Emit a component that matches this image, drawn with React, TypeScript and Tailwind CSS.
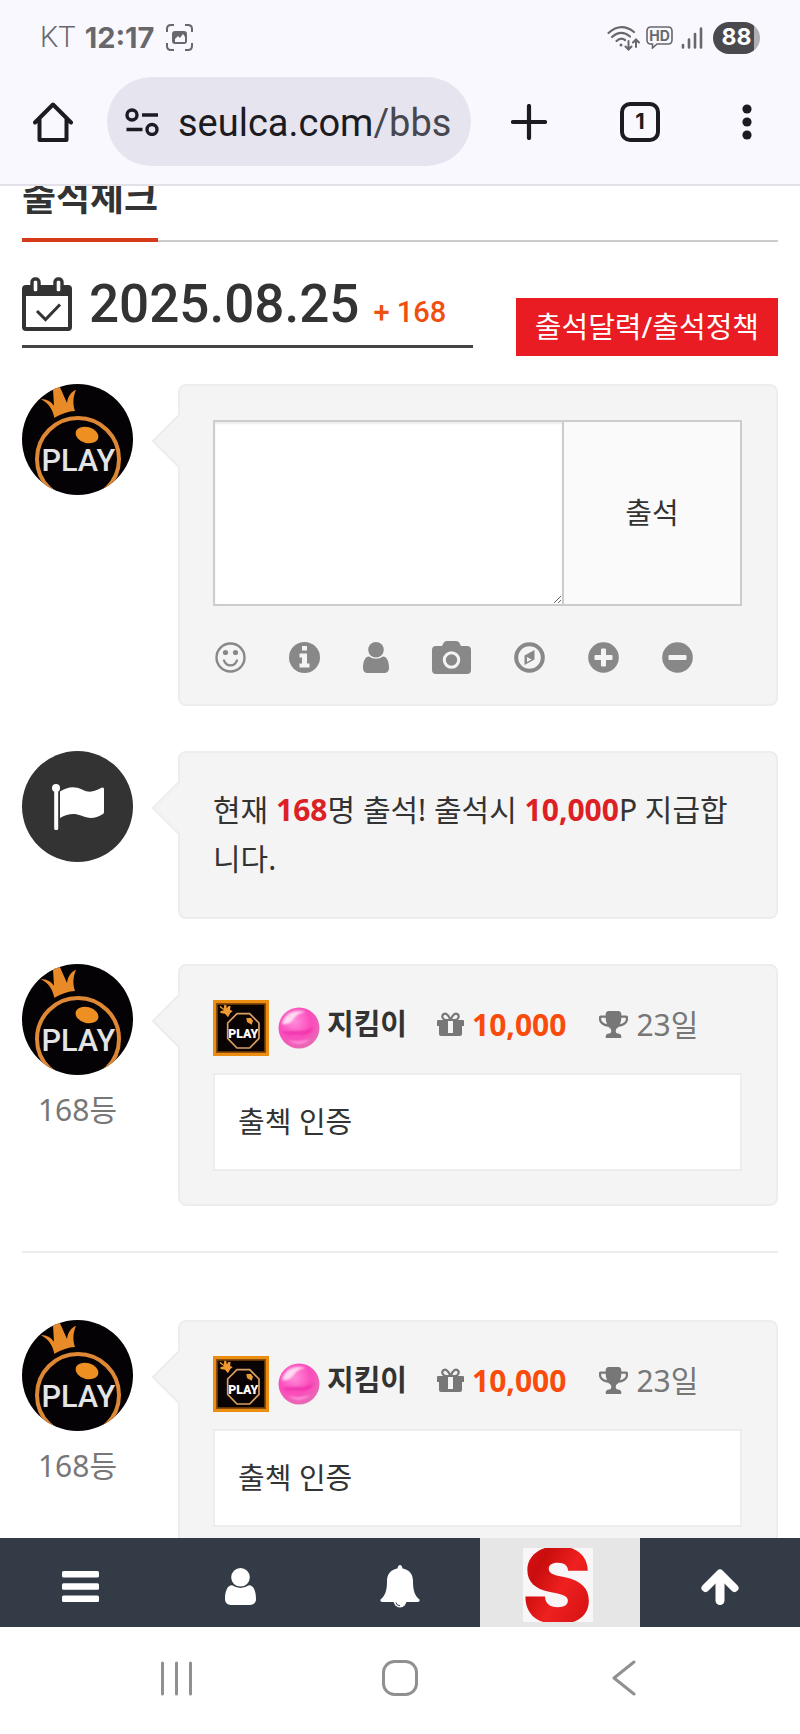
import type { ReactNode } from 'react'

function HomeIcon() {
  return (
    <svg width="40" height="40" viewBox="0 0 40 40" fill="none" stroke="#1b1b21" strokeWidth="4" strokeLinejoin="round" strokeLinecap="round">
      <path d="M2 20.500 20 2.500 38 20.500M6.500 17v21h27V17" />
    </svg>
  )
}

function TuneIcon() {
  return (
    <svg width="34" height="28" viewBox="0 0 34 28" fill="none" stroke="#1b1b21" strokeWidth="3.400">
      <circle cx="7" cy="7" r="5" />
      <circle cx="27" cy="21.500" r="5" />
      <path d="M17 7h16M1.500 21.500h16" />
    </svg>
  )
}

function CaptureIcon() {
  return (
    <svg width="27" height="27" viewBox="0 0 27 27" fill="none" stroke="#68686c" strokeWidth="2">
      <path d="M1 8V5q0-4 4-4h3M19 1h3q4 0 4 4v3M26 19v3q0 4-4 4h-3M8 26H5q-4 0-4-4v-3" />
      <rect x="7" y="8" width="13" height="11" rx="2" fill="#68686c" />
      <path d="M9 18v-3l3-3 2 2 3-4 2 3v5z" fill="#f9f8ff" stroke="none" />
    </svg>
  )
}

function WifiIcon() {
  return (
    <svg width="33" height="26" viewBox="0 0 33 26" fill="none" stroke="#68686c" strokeWidth="2.200" strokeLinecap="round">
      <path d="M1.500 8Q14-3 27 7M5 12Q14 4 23 11.500M9.500 16Q14 12 18 15" />
      <circle cx="14" cy="20" r="1.500" fill="#68686c" stroke="none" />
      <path d="M21.500 16v8M18.500 21.500l3 3 3-3M29 22v-7M26 17.500l3-3 3 3" strokeWidth="2" />
    </svg>
  )
}

function HdIcon() {
  return (
    <svg width="27" height="23" viewBox="0 0 27 23" fill="none" stroke="#68686c" strokeWidth="1.600">
      <path d="M5 1h17q4 0 4 4v9q0 4-4 4H11l-4.500 4V18H5q-4 0-4-4V5q0-4 4-4z" />
      <text x="13.500" y="14.500" textAnchor="middle" fontFamily="Inter, sans-serif" fontSize="14" fontWeight="700" fill="#68686c" stroke="none">
        HD
      </text>
    </svg>
  )
}

function SignalIcon() {
  return (
    <svg width="22" height="22" viewBox="0 0 22 22" stroke="#68686c" strokeWidth="2.600" strokeLinecap="round">
      <path d="M2 18v2.500M8 12.500v8M14 7v13.500M20 1.500v19" />
    </svg>
  )
}

function CalendarIcon() {
  return (
    <svg width="50" height="54" viewBox="0 0 50 54" fill="none" stroke="#333">
      <rect x="2" y="10" width="46" height="42" rx="2" strokeWidth="4" />
      <path d="M2 10h46v9H2z" fill="#333" stroke="none" />
      <rect x="10" y="2" width="7" height="14" rx="3" fill="#fff" strokeWidth="3.400" />
      <rect x="33" y="2" width="7" height="14" rx="3" fill="#fff" strokeWidth="3.400" />
      <path d="M15 34l8.500 8.500L38 27.500" strokeWidth="3" />
    </svg>
  )
}

function SmileIcon() {
  return (
    <svg width="31" height="31" viewBox="0 0 31 31" fill="none" stroke="#888" strokeLinecap="round">
      <circle cx="15.500" cy="15.500" r="14" strokeWidth="2.400" />
      <path d="M9 18.500c2.500 6.500 10.500 6.500 13 0" strokeWidth="2.200" />
      <circle cx="10.500" cy="10.500" r="2.600" fill="#888" stroke="none" />
      <circle cx="20.500" cy="10.500" r="2.600" fill="#888" stroke="none" />
    </svg>
  )
}

function InfoIcon() {
  return (
    <svg width="31" height="31" viewBox="0 0 31 31">
      <circle cx="15.500" cy="15.500" r="15.500" fill="#888" />
      <path d="M13 4h5v4.500h-5zM10.500 11.500H18v10h2.500v4h-10v-4H13v-6h-2.500z" fill="#f4f4f4" />
    </svg>
  )
}

function UserIcon({ className }: { className: string }) {
  return (
    <svg className={className} viewBox="0 0 26 31" fill="currentColor">
      <circle cx="13" cy="7.800" r="7.800" />
      <path d="M6 14.500q7 4.500 14 0c4.500 0 6 6 6 11.500 0 3-2 5-5 5H5c-3 0-5-2-5-5 0-5.500 1.500-11.500 6-11.500z" />
    </svg>
  )
}

function CameraIcon() {
  return (
    <svg width="39" height="33" viewBox="0 0 39 33">
      <path d="M4 5h6l1.500-3Q12.500 0 15 0h9q2.500 0 3.500 2L29 5h6q4 0 4 4v20q0 4-4 4H4q-4 0-4-4V9q0-4 4-4z" fill="#888" />
      <circle cx="19.500" cy="19" r="7.200" fill="none" stroke="#f4f4f4" strokeWidth="3" />
    </svg>
  )
}

function CompassIcon() {
  return (
    <svg width="31" height="31" viewBox="0 0 31 31">
      <circle cx="15.500" cy="15.500" r="13.300" fill="none" stroke="#888" strokeWidth="4" />
      <path d="M10.500 13.500 20.500 8v9.500l-10 5.500z" fill="#888" />
      <path d="M13 15l4.500 2.500L13 20z" fill="#f4f4f4" />
    </svg>
  )
}

function SignIcon({ plus }: { plus?: boolean }) {
  return (
    <svg width="31" height="31" viewBox="0 0 31 31">
      <circle cx="15.500" cy="15.500" r="15.300" fill="#888" />
      <rect x="6.500" y="13" width="18" height="5" rx="1" fill="#f4f4f4" />
      {plus && <rect x="13" y="6.500" width="5" height="18" rx="1" fill="#f4f4f4" />}
    </svg>
  )
}

function FlagIcon() {
  return (
    <svg width="52" height="46" viewBox="0 0 52 46" fill="#fff">
      <circle cx="4" cy="4" r="4" />
      <rect x="2.200" y="4" width="4" height="42" rx="1.500" />
      <path d="M8 7.500c7-4.500 14-6 22-2 8 4 12 2 20-2q2-.5 2 1.500v23q0 1.500-1 2c-8 5-14 5-22 1.500-7-3-14-1.500-21 2.500z" />
    </svg>
  )
}

function GiftIcon() {
  return (
    <svg width="27" height="24" viewBox="0 0 27 24">
      <g fill="none" stroke="#777" strokeWidth="2.200">
        <path d="M13.500 8C11 2 8.500 1 6.700 2 4 4 5.500 7.500 9 8zM13.500 8C16 2 18.500 1 20.300 2 23 4 21.500 7.500 18 8z" />
      </g>
      <path d="M1 8h25q1 0 1 1v5H0V9q0-1 1-1zM2 14h23v8q0 2-2 2H4q-2 0-2-2z" fill="#777" />
      <rect x="11" y="9" width="5" height="12" fill="#f4f4f4" />
    </svg>
  )
}

function TrophyIcon() {
  return (
    <svg width="29" height="27" viewBox="64 128 1664 1536" fill="#777">
      <path d="M522 883q-74-162-74-371h-256v96q0 78 94.500 162t235.500 113zm1078-275v-96h-256q0 209-74 371 141-29 235.500-113t94.500-162zm128-128v128q0 71-41.500 143t-112 130-173 97.500-215.500 44.500q-42 54-95 95-38 34-52.500 72.500t-14.500 89.500q0 54 30.500 91t97.500 37q75 0 133.500 45.500t58.500 114.500v64q0 14-9 23t-23 9h-832q-14 0-23-9t-9-23v-64q0-69 58.500-114.500t133.500-45.500q67 0 97.500-37t30.500-91q0-51-14.500-89.500t-52.500-72.500q-53-41-95-95-113-5-215.500-44.500t-173-97.500-112-130-41.500-143v-128q0-40 28-68t68-28h288v-96q0-66 47-113t113-47h576q66 0 113 47t47 113v96h288q40 0 68 28t28 68z" />
    </svg>
  )
}

function BellIcon() {
  return (
    <svg width="40" height="43" viewBox="0 0 40 43">
      <circle cx="20" cy="36" r="6.500" fill="#fff" />
      <path d="M20 0q2 0 2.500 3.500C29 4.500 33 9 33 16c0 9 1.500 14.500 6.500 18.500q.5 2.500-2 2.500h-35Q0 37 .5 34.500C5.500 30.500 7 25 7 16 7 9 11 4.500 17.500 3.500 18 0 20 0 20 0z" fill="#fff" />
      <path d="M16 37.500q.5 3 4 3.300" fill="none" stroke="#323b46" strokeWidth="1" />
    </svg>
  )
}

function PlayAvatar() {
  return (
    <svg className="size-[111px] rounded-full" viewBox="0 0 333 333" role="img" aria-label="PLAY">
      <rect width="333" height="333" fill="#050205" />
      <path d="M97 101C92 76 80 58 56 45c20 0 33 10 40 20l-3-50 18-12 24 54c2-18 10-32 27-40-9 22-10 42-3 64-20 1-40 8-62 20z" fill="#e98a28" />
      <circle cx="168" cy="225" r="123" fill="none" stroke="#de8836" strokeWidth="12" />
      <ellipse cx="195" cy="153" rx="35" ry="24" fill="#ee8f22" transform="rotate(15 195 153)" />
      <text x="169" y="260" textAnchor="middle" fontFamily="Roboto, sans-serif" fontSize="92" fontWeight="500" fill="#e4e4e4">
        PLAY
      </text>
    </svg>
  )
}

function MemberBadge() {
  return (
    <svg width="56" height="56" viewBox="0 0 168 168" role="img" aria-label="PLAY">
      <rect width="168" height="168" fill="#ea8d10" />
      <rect x="9" y="9" width="150" height="150" fill="#8a4c08" />
      <rect x="14" y="14" width="140" height="140" fill="#0a0304" />
      <path d="M22 17l10 9 2-12 6 1 1 10 6-8 6 2-2 10 8 5-7 5-7 13-9-11-14-2 1-6 10-2-13-9z" fill="#ee9a30" />
      <path d="M72 41h38l28 28v46l-28 29H72l-28-29V69z" fill="none" stroke="#d9a064" strokeWidth="5" />
      <path d="M100 54h14l6 8-4 12-14-8z" fill="#ee9a30" />
      <text x="91" y="115" textAnchor="middle" fontFamily="Roboto, sans-serif" fontSize="37" fontWeight="900" fill="#fff">
        PLAY
      </text>
    </svg>
  )
}

function PinkBall() {
  return (
    <svg width="42" height="42" viewBox="0 0 42 42">
      <defs>
        <radialGradient id="ball" cx="40%" cy="35%" r="65%">
          <stop offset="0" stopColor="#ff8ada" />
          <stop offset="0.600" stopColor="#fb4cbc" />
          <stop offset="1" stopColor="#e868b4" />
        </radialGradient>
        <filter id="soft" x="-20%" y="-20%" width="140%" height="140%">
          <feGaussianBlur stdDeviation="1" />
        </filter>
      </defs>
      <circle cx="21" cy="21" r="20.500" fill="url(#ball)" />
      <g filter="url(#soft)">
        <path d="M4 17C7 5 18 2 28 5c-8 1-10 4-13 8-3 4-7 5-11 4z" fill="#ffd9f1" />
        <path d="M5 25c12-3 20 2 31-5-2 7-10 8-18 8S8 28 5 25z" fill="#ea22a2" opacity="0.600" />
        <path d="M10 33c7 2 14 2 22-1-6 6-15 6-22 1z" fill="#ff9be0" />
      </g>
    </svg>
  )
}

function LogoMark() {
  return (
    <svg width="70" height="74" viewBox="0 0 70 74" role="img" aria-label="S">
      <defs>
        <linearGradient id="logo" x1="0" y1="0" x2="1" y2="1">
          <stop offset="0" stopColor="#e81818" />
          <stop offset="0.300" stopColor="#c90d0d" />
          <stop offset="0.550" stopColor="#f02020" />
          <stop offset="1" stopColor="#c80c0c" />
        </linearGradient>
      </defs>
      <rect width="70" height="74" fill="#f8f6f6" />
      <text x="34" y="75" textAnchor="middle" fontFamily="Inter, sans-serif" fontSize="104" fontWeight="900" fill="url(#logo)">
        S
      </text>
    </svg>
  )
}

function StatusBar() {
  return (
    <div className="flex h-[77px] items-center justify-between px-10 pb-[2px] text-[29px] text-[#68686c]">
      <div className="flex items-center">
        <span className="font-['Roboto',sans-serif] font-light">KT</span>
        <span className="ml-[9px] font-['Inter',sans-serif] font-bold">12:17</span>
        <span className="ml-3">
          <CaptureIcon />
        </span>
      </div>
      <div className="flex items-center gap-[6px]">
        <WifiIcon />
        <HdIcon />
        <span className="ml-[2px]">
          <SignalIcon />
        </span>
        <span className="ml-1 flex h-8 w-[47px] items-center justify-center rounded-full bg-linear-to-r from-[#4a4a4e] from-88% to-[#b0b0b4] to-88% font-['Inter',sans-serif] text-[23px] font-bold text-white">
          88
        </span>
      </div>
    </div>
  )
}

function BrowserBar() {
  return (
    <div className="flex h-[109px] items-start justify-between border-b-2 border-[#e2e1e8] pr-12 pl-[33px] text-[#1b1b21]">
      <div className="flex h-[89px] min-w-0 flex-1 items-center">
        <button type="button" aria-label="Home">
          <HomeIcon />
        </button>
        <button type="button" className="ml-[34px] flex h-[89px] min-w-0 max-w-[364px] flex-1 items-center rounded-full bg-[#e6e5ef] pr-4 pl-[18px]">
          <TuneIcon />
          <span className="ml-[19px] truncate pt-1 font-['Roboto',sans-serif] text-[38px] text-clip">
            seulca.com<span className="text-[#474750]">/bbs</span>
          </span>
        </button>
      </div>
      <div className="flex h-[89px] items-center">
        <button type="button" aria-label="New tab">
          <svg width="36" height="36" viewBox="0 0 36 36" stroke="#1b1b21" strokeWidth="4.200" strokeLinecap="round">
            <path d="M18 2v32M2 18h32" />
          </svg>
        </button>
        <button type="button" aria-label="Tabs" className="ml-[73px] flex size-10 items-center justify-center rounded-[10px] border-4 border-[#1b1b21] font-['Inter',sans-serif] text-[22px] font-bold">
          1
        </button>
        <button type="button" aria-label="Menu" className="ml-[82px]">
          <svg width="10" height="36" viewBox="0 0 10 36" fill="#1b1b21">
            <circle cx="5" cy="5" r="4.600" />
            <circle cx="5" cy="18" r="4.600" />
            <circle cx="5" cy="31" r="4.600" />
          </svg>
        </button>
      </div>
    </div>
  )
}

function Row({ avatar, rank, children }: { avatar: ReactNode; rank?: string; children: ReactNode }) {
  return (
    <div className="flex">
      <div className="w-[111px] shrink-0 text-center text-[30px] text-[#777]">
        {avatar}
        {rank && <div className="mt-[14px] leading-[42px]">{rank}</div>}
      </div>
      <div className="relative ml-[45px] min-w-0 flex-1 rounded-lg border-2 border-[#ededed] bg-[#f4f4f4] pr-[34px] pl-[33px]">
        <svg className="absolute top-[27px] -left-[28px]" width="29" height="56" viewBox="0 0 29 56">
          <path d="M29 1 1 28l28 27z" fill="#f4f4f4" />
          <path d="M27 2 1 28l26 26" fill="none" stroke="#ededed" strokeWidth="2" />
        </svg>
        {children}
      </div>
    </div>
  )
}

function CheckIn() {
  return (
    <Row avatar={<PlayAvatar />} rank="168등">
      <div className="flex items-start pt-[34px]">
        <div className="flex items-center gap-[9px]">
          <MemberBadge />
          <PinkBall />
        </div>
        <div className="flex h-12 items-center text-[30px]">
          <a href="#member" className="ml-[7px] text-[29px] font-bold">지킴이</a>
          <span className="ml-[30px]">
            <GiftIcon />
          </span>
          <b className="ml-2 text-[#f94c0c]">10,000</b>
          <span className="ml-[33px]">
            <TrophyIcon />
          </span>
          <span className="ml-2 text-[#777]">23일</span>
        </div>
      </div>
      <p className="mt-[17px] mb-[33px] border-2 border-[#ededed] bg-white px-[23px] leading-[94px]">출첵 인증</p>
    </Row>
  )
}

function BottomNav() {
  return (
    <nav className="grid h-[89px] shrink-0 grid-cols-5 bg-[#323b46] text-white">
      <button type="button" aria-label="메뉴" className="flex items-center justify-center pt-2">
        <svg width="37" height="31" viewBox="0 0 37 31" fill="currentColor">
          <rect width="37" height="6.500" rx="1.500" />
          <rect y="12.200" width="37" height="6.500" rx="1.500" />
          <rect y="24.400" width="37" height="6.500" rx="1.500" />
        </svg>
      </button>
      <button type="button" aria-label="회원" className="flex items-center justify-center pt-2">
        <UserIcon className="h-[37px] w-[31px]" />
      </button>
      <button type="button" aria-label="알림" className="flex items-center justify-center pt-2">
        <BellIcon />
      </button>
      <a href="#home" className="flex items-center justify-center bg-[#e6e6e6] pt-1 pr-1">
        <LogoMark />
      </a>
      <button type="button" aria-label="위로" className="flex items-center justify-center pt-2">
        <svg width="38" height="36" viewBox="0 0 38 36" fill="none" stroke="currentColor" strokeLinecap="round" strokeLinejoin="round">
          <path d="M4.500 19 19 4.500 33.500 19" strokeWidth="8" />
          <path d="M19 8v23.500" strokeWidth="9" />
        </svg>
      </button>
    </nav>
  )
}

function SystemNav() {
  return (
    <nav className="flex h-[107px] shrink-0 items-center justify-between px-[160px] pb-[6px]">
      <button type="button" aria-label="Recents">
        <svg width="33" height="36" viewBox="0 0 33 36" stroke="#909090" strokeWidth="3" strokeLinecap="round">
          <path d="M2.500 3v31M16.500 3v31M30.500 3v31" />
        </svg>
      </button>
      <button type="button" aria-label="Home">
        <svg width="36" height="36" viewBox="0 0 36 36" fill="none" stroke="#909090" strokeWidth="3">
          <rect x="1.500" y="1.500" width="33" height="33" rx="11" />
        </svg>
      </button>
      <button type="button" aria-label="Back" className="flex w-[33px] justify-center">
        <svg width="24" height="36" viewBox="0 0 24 36" fill="none" stroke="#909090" strokeWidth="3" strokeLinecap="round" strokeLinejoin="round">
          <path d="M22 2 2 18l20 16" />
        </svg>
      </button>
    </nav>
  )
}

export default function App() {
  return (
    <div className="flex h-screen flex-col overflow-hidden bg-white font-['Noto_Sans','Noto_Sans_CJK_KR',sans-serif] text-[29px] text-[#333]">
      <header className="shrink-0 bg-[#f9f8ff]">
        <StatusBar />
        <BrowserBar />
      </header>

      <main className="min-h-0 flex-1 overflow-hidden px-[22px]">
        <div className="-mt-2 flex items-end">
          <h1 className="border-b-4 border-[#d63a18] pb-[23px] text-[37px] leading-[37px] font-bold">출석체크</h1>
          <div className="flex-1 border-b-2 border-[#ccc]" />
        </div>

        <div className="mt-[35px] flex items-start justify-between">
          <div className="flex h-[71px] w-[451px] items-start border-b-[3px] border-[#444] font-['Roboto',sans-serif] font-medium">
            <CalendarIcon />
            <div className="ml-[17px] leading-[54px] whitespace-nowrap">
              <span className="text-[53px]">2025.08.25</span>
              <span className="ml-[14px] text-[29px] text-[#f0500f]">+ 168</span>
            </div>
          </div>
          <a href="#calendar" className="mt-[21px] bg-[#e91b23] px-[19px] leading-[58px] text-white">출석달력/출석정책</a>
        </div>

        <div className="mt-7">
          <Row avatar={<PlayAvatar />}>
            <form className="mt-[34px] flex h-[186px] border-2 border-[#ccc]">
              <textarea aria-label="출석 메시지" className="min-w-0 flex-1 resize bg-white p-3 shadow-[inset_0_2px_2px_rgba(0,0,0,0.08)]" />
              <button type="button" className="w-[178px] border-l-2 border-[#ccc] bg-[#fafafa]">출석</button>
            </form>
            <div className="mt-[33px] mb-[29px] flex h-[36px] items-center text-[#888]">
              <button type="button" aria-label="이모티콘" className="ml-[2px]"><SmileIcon /></button>
              <button type="button" aria-label="정보" className="ml-[43px]"><InfoIcon /></button>
              <button type="button" aria-label="회원" className="ml-[43px]"><UserIcon className="h-[31px] w-[26px]" /></button>
              <button type="button" aria-label="사진" className="ml-[43px]"><CameraIcon /></button>
              <button type="button" aria-label="지도" className="ml-[43px]"><CompassIcon /></button>
              <button type="button" aria-label="늘리기" className="ml-[43px]"><SignIcon plus /></button>
              <button type="button" aria-label="줄이기" className="ml-[43px]"><SignIcon /></button>
            </div>
          </Row>
        </div>

        <div className="mt-[45px]">
          <Row
            avatar={
              <div className="flex size-[111px] items-center justify-center rounded-full bg-[#333]">
                <FlagIcon />
              </div>
            }
          >
            <p className="pt-8 pb-[34px] text-[30px] leading-[49px] break-all">
              현재 <b className="text-[#dd1f26]">168</b>명 출석! 출석시 <b className="text-[#dd1f26]">10,000</b>P 지급합니다.
            </p>
          </Row>
        </div>

        <div className="mt-[45px]">
          <CheckIn />
        </div>
        <hr className="mt-[45px] mb-[67px] border-t-2 border-[#ececec]" />
        <CheckIn />
      </main>

      <BottomNav />
      <SystemNav />
    </div>
  )
}
